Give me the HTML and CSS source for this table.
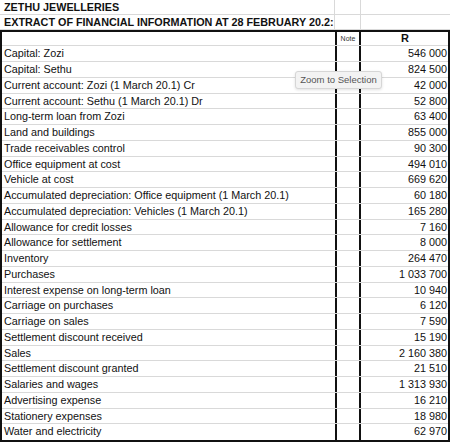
FILE: index.html
```html
<!DOCTYPE html>
<html>
<head>
<meta charset="utf-8">
<link rel="stylesheet" href="styles.css">
</head>
<body>
<div class="sheet">
  <div class="trow">
    <div class="c1 title">ZETHU JEWELLERIES</div><div class="c2"></div><div class="c3"></div>
  </div>
  <div class="trow">
    <div class="c1 title">EXTRACT OF FINANCIAL INFORMATION AT 28 FEBRUARY 20.2:</div><div class="c2"></div><div class="c3"></div>
  </div>
  <div class="block">
    <div class="row head"><div class="c1"></div><div class="c2 note">Note</div><div class="c3 rhead">R</div></div>
    <div class="row"><div class="c1">Capital: Zozi</div><div class="c2"></div><div class="c3">546 000</div></div>
    <div class="row"><div class="c1">Capital: Sethu</div><div class="c2"></div><div class="c3">824 500</div></div>
    <div class="row"><div class="c1">Current account: Zozi (1 March 20.1) Cr</div><div class="c2"></div><div class="c3">42 000</div></div>
    <div class="row"><div class="c1">Current account: Sethu (1 March 20.1) Dr</div><div class="c2"></div><div class="c3">52 800</div></div>
    <div class="row"><div class="c1">Long-term loan from Zozi</div><div class="c2"></div><div class="c3">63 400</div></div>
    <div class="row"><div class="c1">Land and buildings</div><div class="c2"></div><div class="c3">855 000</div></div>
    <div class="row"><div class="c1">Trade receivables control</div><div class="c2"></div><div class="c3">90 300</div></div>
    <div class="row"><div class="c1">Office equipment at cost</div><div class="c2"></div><div class="c3">494 010</div></div>
    <div class="row"><div class="c1">Vehicle at cost</div><div class="c2"></div><div class="c3">669 620</div></div>
    <div class="row"><div class="c1">Accumulated depreciation: Office equipment (1 March 20.1)</div><div class="c2"></div><div class="c3">60 180</div></div>
    <div class="row"><div class="c1">Accumulated depreciation: Vehicles (1 March 20.1)</div><div class="c2"></div><div class="c3">165 280</div></div>
    <div class="row"><div class="c1">Allowance for credit losses</div><div class="c2"></div><div class="c3">7 160</div></div>
    <div class="row"><div class="c1">Allowance for settlement</div><div class="c2"></div><div class="c3">8 000</div></div>
    <div class="row"><div class="c1">Inventory</div><div class="c2"></div><div class="c3">264 470</div></div>
    <div class="row"><div class="c1">Purchases</div><div class="c2"></div><div class="c3">1 033 700</div></div>
    <div class="row"><div class="c1">Interest expense on long-term loan</div><div class="c2"></div><div class="c3">10 940</div></div>
    <div class="row"><div class="c1">Carriage on purchases</div><div class="c2"></div><div class="c3">6 120</div></div>
    <div class="row"><div class="c1">Carriage on sales</div><div class="c2"></div><div class="c3">7 590</div></div>
    <div class="row"><div class="c1">Settlement discount received</div><div class="c2"></div><div class="c3">15 190</div></div>
    <div class="row"><div class="c1">Sales</div><div class="c2"></div><div class="c3">2 160 380</div></div>
    <div class="row"><div class="c1">Settlement discount granted</div><div class="c2"></div><div class="c3">21 510</div></div>
    <div class="row"><div class="c1">Salaries and wages</div><div class="c2"></div><div class="c3">1 313 930</div></div>
    <div class="row"><div class="c1">Advertising expense</div><div class="c2"></div><div class="c3">16 210</div></div>
    <div class="row"><div class="c1">Stationery expenses</div><div class="c2"></div><div class="c3">18 980</div></div>
    <div class="row last"><div class="c1">Water and electricity</div><div class="c2"></div><div class="c3">62 970</div></div>
  </div>
  <div class="tooltip">Zoom to Selection</div>
</div>
</body>
</html>
```

FILE: styles.css
```css
* { box-sizing: border-box; }
html, body { margin: 0; padding: 0; background: #fff; }
body {
  font-family: "Liberation Sans", Arial, sans-serif;
  color: #111;
  width: 451px;
  height: 443px;
  overflow: hidden;
}
.sheet {
  position: relative;
  width: 450px;
}
.trow {
  display: flex;
  height: 15px;
  border-bottom: 1px solid #d9d9d9;
}
.trow .c1 {
  width: 335px;
  padding-left: 4px;
  white-space: nowrap;
  overflow: visible;
  border-right: 1px solid #d9d9d9;
}
.trow .c2 {
  width: 26px;
  border-right: 1px solid #d9d9d9;
}
.trow .c3 { flex: 1; }
.title {
  font-weight: bold;
  font-size: 10.8px;
  line-height: 15px;
}
.block {
  border: 2px solid #111;
  width: 450px;
}
.row {
  display: flex;
  height: 15.75px;
  border-bottom: 1px solid #d9d9d9;
  font-size: 10.8px;
  line-height: 14.75px;
}
.row.head {
  height: 14.3px;
  line-height: 13.3px;
}
.row.last { border-bottom: none; }
.row .c1 {
  width: 333px;
  padding-left: 2px;
  white-space: nowrap;
}
.row .c2 {
  width: 26px;
  border-left: 2px solid #111;
  border-right: 2px solid #111;
}
.row .c3 {
  flex: 1;
  text-align: right;
  padding-right: 1px;
}
.note {
  font-size: 7px;
  text-align: center;
  color: #333;
}
.rhead {
  font-weight: bold;
  font-size: 11px;
  text-align: center !important;
  padding-left: 2px;
}
.tooltip {
  position: absolute;
  left: 295px;
  top: 71px;
  width: 87px;
  height: 18px;
  background: #f3f3f3;
  border: 1px solid #d6d6d6;
  border-radius: 3px;
  box-shadow: 0 1px 3px rgba(0,0,0,0.12);
  font-size: 9.5px;
  line-height: 16px;
  color: #555;
  text-align: center;
  white-space: nowrap;
}
```
